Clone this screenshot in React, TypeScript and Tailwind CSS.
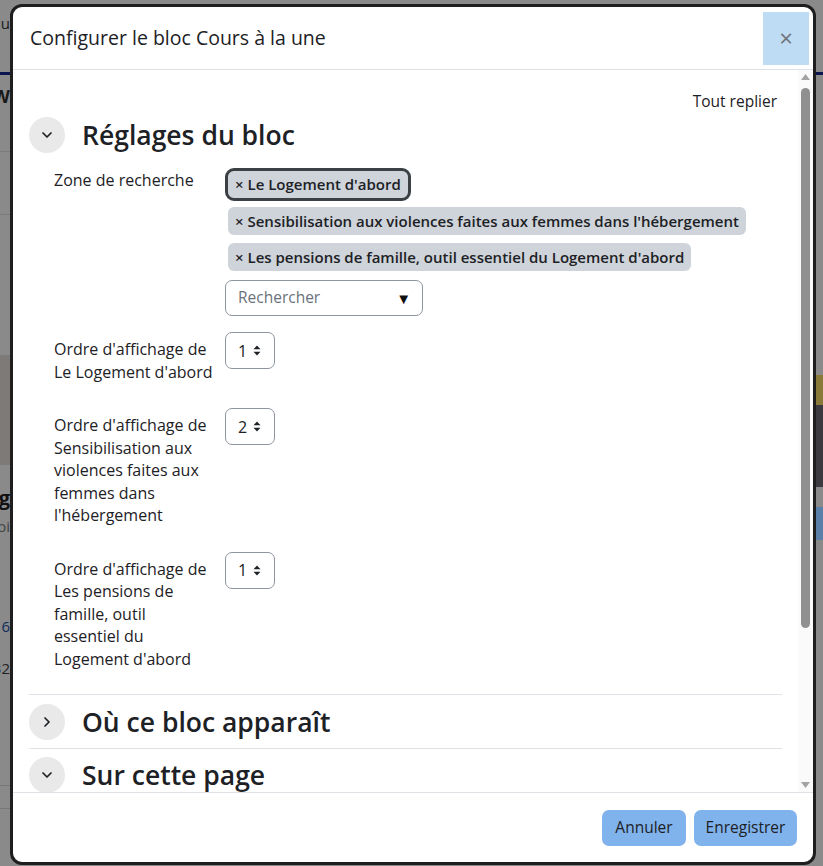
import React from "react";
import { ChevronDown, ChevronRight } from "lucide-react";

const font = { fontFamily: '"Open Sans", "Noto Sans", sans-serif' } as const;

function Spin() {
  return (
    <svg width="8" height="11" viewBox="0 0 8 11" className="ml-[6px]">
      <path d="M4 0.5 L7.5 4.2 L0.5 4.2 Z" fill="#1d2125" />
      <path d="M4 10.5 L7.5 6.8 L0.5 6.8 Z" fill="#1d2125" />
    </svg>
  );
}

function NumSelect({ v }: { v: string }) {
  return (
    <div className="flex h-[37px] w-[50px] items-center rounded-[7px] border border-[#8f959e] bg-white pl-[12px] text-[16px] text-[#1d2125]">
      <span>{v}</span>
      <Spin />
    </div>
  );
}

function Tag({ text, focused }: { text: string; focused?: boolean }) {
  return (
    <div
      className={
        "flex items-center whitespace-nowrap rounded-[6px] bg-[#ced4da] px-[7px] text-[15px] font-semibold text-[#1d2125] " +
        (focused ? "h-[27px] outline outline-[3px] outline-[#3b4045]" : "h-[28px]")
      }
    >
      × {text}
    </div>
  );
}

function SectionHeader({ title, open }: { title: string; open: boolean }) {
  return (
    <div className="flex h-[36px] items-center gap-[17px]">
      <div className="flex h-[36px] w-[36px] items-center justify-center rounded-full bg-[#e9e9e9]">
        {open ? (
          <ChevronDown size={16} strokeWidth={2.6} color="#1d2125" />
        ) : (
          <ChevronRight size={16} strokeWidth={2.6} color="#1d2125" />
        )}
      </div>
      <div className="text-[26.5px] font-semibold leading-none text-[#1d2125]">{title}</div>
    </div>
  );
}

function Label({ children, pt = "pt-[6px]" }: { children: React.ReactNode; pt?: string }) {
  return (
    <div
      className={
        "w-[196px] shrink-0 whitespace-nowrap pb-[7px] pl-[25px] text-[16px] leading-[22.5px] text-[#1d2125] " + pt
      }
    >
      {children}
    </div>
  );
}

export default function App() {
  return (
    <div className="relative h-[866px] w-[823px] overflow-hidden bg-[#8a8a8a]" style={font}>
      {/* background page, dimmed */}
      <div className="flex h-full w-full">
        <div className="flex w-[10px] flex-col overflow-hidden">
          <div className="mt-[12px] flex h-[20px] justify-end text-[15px] text-[#1a1a1a]">du</div>
          <div className="mt-[40px] h-[3px] w-full bg-[#0b1550]" />
          <div className="mt-[8px] flex h-[24px] justify-end text-[18px] font-bold text-[#1a1a1a]">W</div>
          <div className="mt-[44px] h-px w-full bg-[#7a7a7a]" />
          <div className="mt-[62px] h-px w-full bg-[#7a7a7a]" />
          <div className="mt-[140px] h-[110px] w-full bg-[#7d7a78]" />
          <div className="mt-[18px] flex h-[28px] justify-end text-[20px] font-bold text-[#111]">og</div>
          <div className="mt-[4px] flex h-[22px] justify-end text-[15px] text-[#444]">oi</div>
          <div className="mt-[78px] flex h-[22px] justify-end text-[15px] text-[#102a5a]">6</div>
          <div className="mt-[20px] flex h-[22px] justify-end text-[15px] text-[#222]">32</div>
          <div className="mt-[106px] h-px w-full bg-[#777]" />
          <div className="mt-[22px] h-px w-full bg-[#777]" />
        </div>
        <div className="flex-1" />
        <div className="flex w-[7px] flex-col overflow-hidden">
          <div className="mt-[72px] h-[3px] w-full bg-[#0b1550]" />
          <div className="mt-[300px] h-[30px] w-full bg-[#8a7a3a]" />
          <div className="h-[82px] w-full bg-[#3a3a3f]" />
          <div className="mt-[20px] h-[33px] w-full bg-[#5a7fa8]" />
        </div>
      </div>

      {/* modal */}
      <div className="absolute left-[10px] top-[4px] flex h-[861px] w-[806px] flex-col overflow-hidden rounded-[12px] border-[3px] border-[#1e1e1e] bg-white">
        {/* header */}
        <div className="flex h-[63px] shrink-0 items-center justify-between border-b border-[#dee2e6] pl-[17px] pr-[4px]">
          <div className="text-[19.5px] font-medium text-[#1d2125]">Configurer le bloc Cours à la une</div>
          <div className="flex h-[53px] w-[46px] items-center justify-center bg-[#bfdcf5] text-[24px] leading-none text-[#6f7479]">
            ×
          </div>
        </div>

        {/* body */}
        <div className="flex min-h-0 flex-1">
          <div className="min-w-0 flex-1 overflow-hidden px-[16px]">
            <div className="flex justify-end pr-[5px] pt-[20px] text-[15.5px] leading-[22px] text-[#1d2125]">
              Tout replier
            </div>
            <div className="mt-[5px]">
              <SectionHeader title="Réglages du bloc" open />
            </div>
            <div className="pt-[15px]">
              <div className="mb-[16px] flex">
                <Label pt="pt-[1px]">Zone de recherche</Label>
                <div className="flex flex-col items-start pt-[3px]">
                  <div className="ml-[3px]">
                    <Tag text="Le Logement d'abord" focused />
                  </div>
                  <div className="ml-[3px] mt-[9px]">
                    <Tag text="Sensibilisation aux violences faites aux femmes dans l'hébergement" />
                  </div>
                  <div className="ml-[3px] mt-[8px]">
                    <Tag text="Les pensions de famille, outil essentiel du Logement d'abord" />
                  </div>
                  <div className="mt-[9px] flex h-[36px] w-[198px] items-center justify-between rounded-[7px] border border-[#8f959e] pl-[12px] pr-[11px] text-[15.5px]">
                    <span className="text-[#6a737b]">Rechercher</span>
                    <span className="text-[15px] text-[#111]">▼</span>
                  </div>
                </div>
              </div>

              <div className="mb-[18px] flex">
                <Label>
                  Ordre d'affichage de
                  <br />
                  Le Logement d'abord
                </Label>
                <div>
                  <NumSelect v="1" />
                </div>
              </div>
              <div className="mb-[18px] flex">
                <Label>
                  Ordre d'affichage de
                  <br />
                  Sensibilisation aux
                  <br />
                  violences faites aux
                  <br />
                  femmes dans
                  <br />
                  l'hébergement
                </Label>
                <div>
                  <NumSelect v="2" />
                </div>
              </div>
              <div className="flex">
                <Label>
                  Ordre d'affichage de
                  <br />
                  Les pensions de
                  <br />
                  famille, outil
                  <br />
                  essentiel du
                  <br />
                  Logement d'abord
                </Label>
                <div>
                  <NumSelect v="1" />
                </div>
              </div>
            </div>
            <div className="mt-[17px] border-t border-[#dee2e6] pb-[8px] pt-[9px]">
              <SectionHeader title="Où ce bloc apparaît" open={false} />
            </div>
            <div className="border-t border-[#dee2e6] pt-[8px]">
              <SectionHeader title="Sur cette page" open />
            </div>
          </div>
          {/* scrollbar */}
          <div className="flex w-[15px] shrink-0 flex-col items-center bg-[#fafafa] pt-[4px]">
            <svg width="9" height="6" viewBox="0 0 9 6">
              <path d="M4.5 0 L9 6 L0 6 Z" fill="#a3a3a3" />
            </svg>
            <div className="mt-[8px] h-[540px] w-[9px] rounded-full bg-[#909090]" />
            <div className="flex-1" />
            <svg width="9" height="6" viewBox="0 0 9 6" className="mb-[4px]">
              <path d="M0 0 L9 0 L4.5 6 Z" fill="#a3a3a3" />
            </svg>
          </div>
        </div>

        {/* footer */}
        <div className="flex h-[70px] shrink-0 items-center justify-end gap-[8px] border-t border-[#dee2e6] pr-[16px]">
          <div className="flex h-[36px] w-[84px] items-center justify-center rounded-[7px] bg-[#80b2eb] text-[15.5px] text-[#1d2125]">
            Annuler
          </div>
          <div className="flex h-[36px] w-[103px] items-center justify-center rounded-[7px] bg-[#80b2eb] text-[15.5px] text-[#1d2125]">
            Enregistrer
          </div>
        </div>
      </div>
    </div>
  );
}
